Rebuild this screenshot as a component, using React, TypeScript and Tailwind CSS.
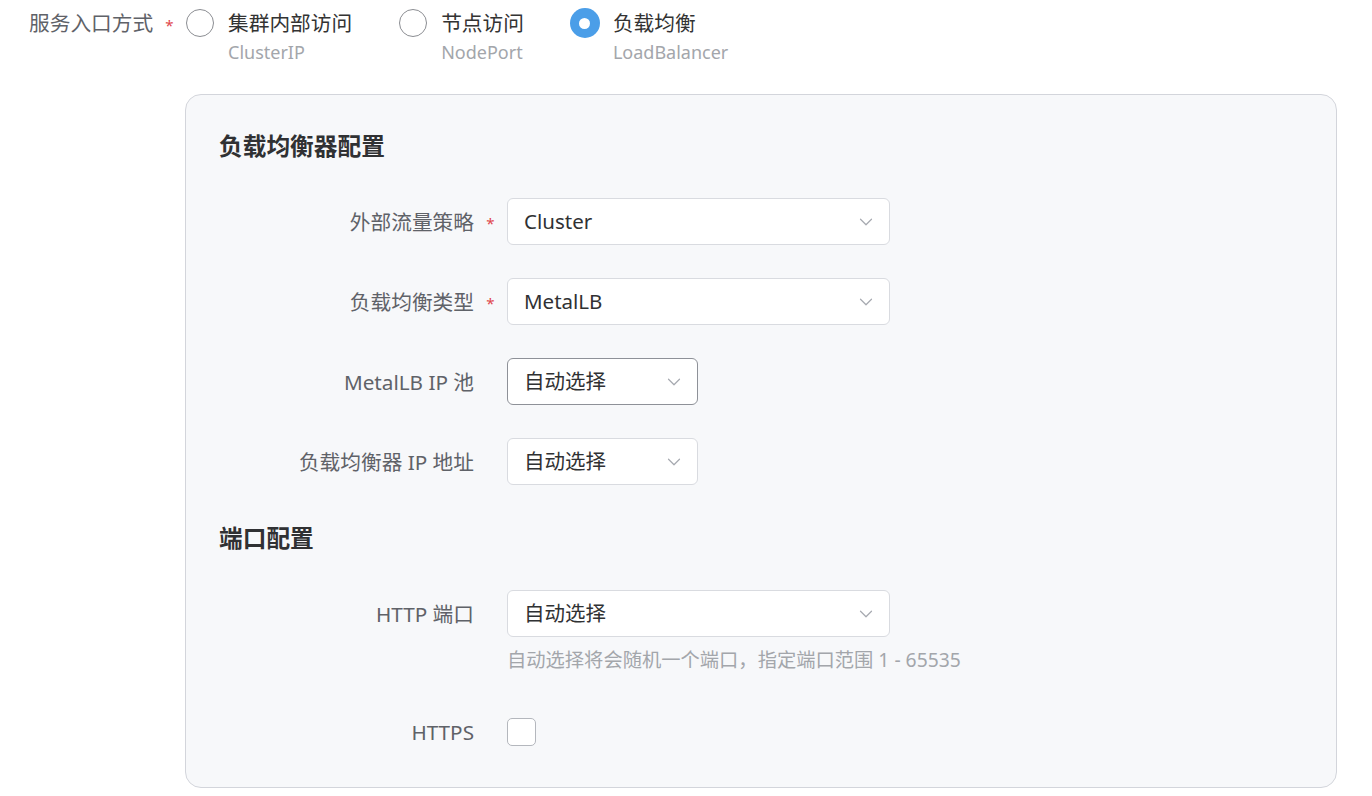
import { ChevronDown } from "lucide-react";

const font = { fontFamily: '"Noto Sans", "Noto Sans CJK SC", sans-serif' };

const radios = [
  { label: "集群内部访问", sub: "ClusterIP", checked: false },
  { label: "节点访问", sub: "NodePort", checked: false },
  { label: "负载均衡", sub: "LoadBalancer", checked: true },
];

function Star() {
  return <span className="text-[#e0464b] text-[15px] leading-none mt-[4px]">*</span>;
}

function Select({ value, wide, active }: { value: string; wide?: boolean; active?: boolean }) {
  return (
    <div
      className={`flex items-center justify-between h-[47px] bg-white rounded-[6px] border pl-[16px] pr-[12px] ${
        wide ? "w-[383px]" : "w-[191px]"
      } ${active ? "border-[#8e9198]" : "border-[#d9dbe0]"}`}
    >
      <span className="text-[20.5px] text-[#303133]">{value}</span>
      <ChevronDown size={22} strokeWidth={1.3} className="text-[#a6a9b0]" />
    </div>
  );
}

function Row({
  label,
  required,
  children,
}: {
  label: string;
  required?: boolean;
  children: React.ReactNode;
}) {
  return (
    <div className="flex items-center">
      <div className="w-[255px] text-right text-[20.7px] text-[#5f6268] leading-[28px]">{label}</div>
      <div className="w-[33px] flex justify-center">{required && <Star />}</div>
      {children}
    </div>
  );
}

export default function App() {
  return (
    <div className="min-h-screen bg-white pt-[9px]" style={font}>
      <div className="flex items-start pl-[29px]">
        <div className="w-[124px] whitespace-nowrap text-[20.7px] text-[#5f6268] leading-[28px]">服务入口方式</div>
        <div className="w-[33px] h-[28px] flex items-center justify-center">
          <Star />
        </div>
        <div className="flex gap-[47px]">
          {radios.map((r) => (
            <div key={r.sub} className="flex items-start gap-[14px]">
              {r.checked ? (
                <div className="w-[30px] h-[30px] -mt-[1px] -ml-[1px] -mr-[1px] rounded-full bg-[#4b9ee8] flex items-center justify-center">
                  <div className="w-[11px] h-[11px] rounded-full bg-white" />
                </div>
              ) : (
                <div className="w-[28px] h-[28px] rounded-full border-[1.5px] border-[#8b8d92] bg-white" />
              )}
              <div className="flex flex-col">
                <span className="text-[20.7px] text-[#333] leading-[28px]">{r.label}</span>
                <span className="text-[18px] text-[#a3a6ab] leading-[24px] mt-[3px]">{r.sub}</span>
              </div>
            </div>
          ))}
        </div>
      </div>

      <div className="ml-[185px] mt-[30px] w-[1152px] rounded-[16px] border border-[#d3d5db] bg-[#f7f8fa] pl-[33px] pt-[35px] pb-[41px]">
        <h2 className="text-[23.7px] font-bold text-[#303133] leading-[32px]">负载均衡器配置</h2>
        <div className="mt-[36px] flex flex-col gap-[33px]">
          <Row label="外部流量策略" required>
            <Select value="Cluster" wide />
          </Row>
          <Row label="负载均衡类型" required>
            <Select value="MetalLB" wide />
          </Row>
          <Row label="MetalLB IP 池">
            <Select value="自动选择" active />
          </Row>
          <Row label="负载均衡器 IP 地址">
            <Select value="自动选择" />
          </Row>
        </div>

        <h2 className="mt-[37px] text-[23.7px] font-bold text-[#303133] leading-[32px]">端口配置</h2>
        <div className="mt-[36px]">
          <Row label="HTTP 端口">
            <Select value="自动选择" wide />
          </Row>
          <div className="ml-[288px] mt-[10px] text-[19.3px] text-[#a3a6ab] leading-[26px]">
            自动选择将会随机一个端口，指定端口范围 1 - 65535
          </div>
        </div>
        <div className="mt-[45px]">
          <Row label="HTTPS">
            <div className="w-[29px] h-[28px] rounded-[5px] border border-[#b4b7bd] bg-white" />
          </Row>
        </div>
      </div>
    </div>
  );
}
